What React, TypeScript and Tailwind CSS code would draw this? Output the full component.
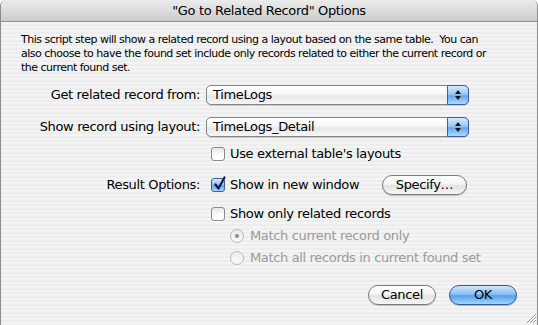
import React from "react";

function Arrows() {
  return (
    <svg width="8" height="12" viewBox="0 0 8 12">
      <path d="M4 1 L7 5 L1 5 Z" fill="#111" />
      <path d="M4 11 L7 7 L1 7 Z" fill="#111" />
    </svg>
  );
}

function Popup({ text }: { text: string }) {
  return (
    <div className="relative flex h-[20px] w-[263px] items-center rounded-[5px] border border-[#858585] bg-[linear-gradient(to_bottom,#ffffff_0%,#f6f6f6_45%,#e6e6e6_55%,#f7f7f7_100%)] pl-[6px] text-[13px] shadow-[0_1px_1px_rgba(0,0,0,0.15)]">
      <span>{text}</span>
      <div className="absolute bottom-[-1px] right-[-1px] top-[-1px] flex w-[22px] items-center justify-center rounded-r-[5px] border border-[#3d5f9e] bg-[linear-gradient(to_bottom,#d6e8fb_0%,#9cc6f2_45%,#64a7ec_55%,#a8dcff_100%)]">
        <Arrows />
      </div>
    </div>
  );
}

function Checkbox({ checked }: { checked?: boolean }) {
  if (checked) {
    return (
      <span className="relative inline-block h-[14px] w-[14px] shrink-0 rounded-[3px] border border-[#3d5f9e] bg-[linear-gradient(to_bottom,#d6e8fb_0%,#9cc6f2_45%,#64a7ec_55%,#a8dcff_100%)]">
        <svg className="absolute left-[1px] top-[-3px]" width="13" height="15" viewBox="0 0 13 15">
          <path d="M2.5 8.5 L5.5 12.5 L11.5 1.5" fill="none" stroke="#14194a" strokeWidth="2.2" strokeLinecap="round" strokeLinejoin="round" />
        </svg>
      </span>
    );
  }
  return (
    <span className="inline-block h-[14px] w-[14px] shrink-0 rounded-[3px] border border-[#8a8a8a] bg-[linear-gradient(to_bottom,#e6e6e6_0%,#fdfdfd_60%,#ffffff_100%)] shadow-[0_1px_0_rgba(255,255,255,0.8)]" />
  );
}

function Radio({ selected }: { selected?: boolean }) {
  return (
    <span className="flex h-[14px] w-[14px] shrink-0 items-center justify-center rounded-full border border-[#b8b8b8] bg-[linear-gradient(to_bottom,#ececec_0%,#fafafa_100%)]">
      {selected && <span className="h-[4px] w-[4px] rounded-full bg-[#8c8c8c]" />}
    </span>
  );
}

export default function App() {
  return (
    <div className="relative h-[325px] w-[538px] overflow-hidden bg-white font-['DejaVu_Sans',sans-serif] text-black">
      <div className="flex h-full flex-col overflow-hidden rounded-t-[6px] border-x border-[#8c8c8c] bg-[repeating-linear-gradient(to_bottom,#ededed_0px,#ededed_2px,#f4f4f4_2px,#f4f4f4_4px)]">
        {/* title bar */}
        <div className="flex h-[22px] shrink-0 items-center justify-center border-b border-[#8f8f8f] bg-[linear-gradient(to_bottom,#ececec_0%,#dcdcdc_50%,#cbcbcb_100%)] text-[13px] tracking-[-0.35px]">
          "Go to Related Record" Options
        </div>

        {/* description */}
        <p className="mt-[11px] pl-[20px] pr-[36px] text-[11px] leading-[14px] tracking-[-0.5px]">
          This script step will show a related record using a layout based on the same table.&nbsp; You can also choose to have the found set include only records related to either the current record or the current found set.
        </p>

        <div className="text-[13px] tracking-[-0.35px]">
          {/* row 1 */}
          <div className="mt-[10px] flex items-center">
            <div className="w-[199px] text-right">Get related record from:</div>
            <div className="ml-[6px]">
              <Popup text="TimeLogs" />
            </div>
          </div>

          {/* row 2 */}
          <div className="mt-[12px] flex items-center">
            <div className="w-[199px] text-right">Show record using layout:</div>
            <div className="ml-[6px]">
              <Popup text="TimeLogs_Detail" />
            </div>
          </div>

          {/* external layouts */}
          <div className="mt-[10px] flex h-[14px] items-center pl-[210px]">
            <Checkbox />
            <span className="ml-[5px]">Use external table's layouts</span>
          </div>

          {/* result options */}
          <div className="mt-[14px] flex h-[20px] items-center">
            <div className="w-[199px] text-right">Result Options:</div>
            <div className="ml-[11px] flex items-center">
              <Checkbox checked />
              <span className="ml-[5px]">Show in new window</span>
            </div>
            <button className="ml-auto mr-[70px] flex h-[20px] w-[85px] items-center justify-center rounded-full border border-[#7a7a7a] bg-[linear-gradient(to_bottom,#ffffff_0%,#f4f4f4_45%,#e2e2e2_55%,#f6f6f6_100%)] text-[13px] shadow-[0_1px_1px_rgba(0,0,0,0.2)]">
              Specify…
            </button>
          </div>

          {/* only related */}
          <div className="mt-[12px] flex h-[14px] items-center pl-[210px]">
            <Checkbox />
            <span className="ml-[5px]">Show only related records</span>
          </div>

          <div className="mt-[8px] flex h-[14px] items-center pl-[229px] text-[#9a9a9a]">
            <Radio selected />
            <span className="ml-[6px]">Match current record only</span>
          </div>

          <div className="mt-[8px] flex h-[14px] items-center pl-[229px] text-[#9a9a9a]">
            <Radio />
            <span className="ml-[6px]">Match all records in current found set</span>
          </div>

          {/* buttons */}
          <div className="mt-[20px] flex items-center justify-end pr-[20px]">
            <button className="flex h-[20px] w-[68px] items-center justify-center rounded-full border border-[#7a7a7a] bg-[linear-gradient(to_bottom,#ffffff_0%,#f4f4f4_45%,#e2e2e2_55%,#f6f6f6_100%)] shadow-[0_1px_1px_rgba(0,0,0,0.2)]">
              Cancel
            </button>
            <button className="ml-[13px] flex h-[20px] w-[68px] items-center justify-center rounded-full border border-[#34589a] bg-[linear-gradient(to_bottom,#cfe4fb_0%,#8fc0f1_45%,#54a0ec_55%,#9fd8ff_100%)] shadow-[0_1px_1px_rgba(0,0,0,0.25)]">
              OK
            </button>
          </div>
        </div>
      </div>

      {/* resize grip */}
      <svg className="absolute bottom-[1px] right-[1px]" width="13" height="13" viewBox="0 0 13 13">
        <path d="M12 3 L3 12 M12 6 L6 12 M12 9 L9 12" stroke="#9a9a9a" strokeWidth="1" />
        <path d="M12 4 L4 12 M12 7 L7 12 M12 10 L10 12" stroke="#ffffff" strokeWidth="1" />
      </svg>
    </div>
  );
}
